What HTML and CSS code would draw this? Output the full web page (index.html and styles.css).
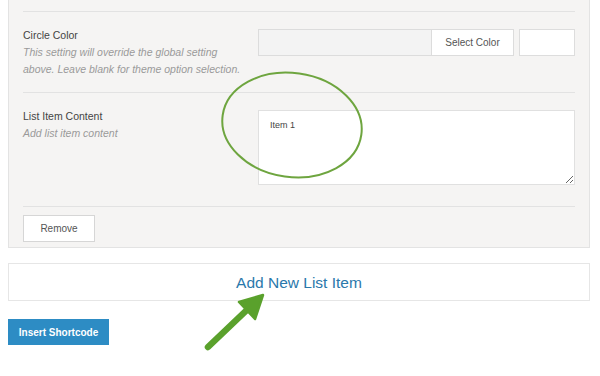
FILE: index.html
```html
<!DOCTYPE html>
<html lang="en">
<head>
    <meta charset="UTF-8">
    <meta name="viewport" content="width=device-width, initial-scale=1.0">
    <title>List Item Options</title>
    <link rel="stylesheet" href="styles.css">
</head>
<body>
    <div class="panel">
        <div class="row">
            <div class="label-col">
                <div class="label">Circle Color</div>
                <div class="desc">This setting will override the global setting<br>above. Leave blank for theme option selection.</div>
            </div>
            <div class="color-field">
                <div class="color-picker">
                    <span class="color-btn">Select Color</span>
                </div>
                <span class="color-swatch"></span>
            </div>
        </div>

        <div class="row">
            <div class="label-col">
                <div class="label">List Item Content</div>
                <div class="desc">Add list item content</div>
            </div>
            <div>
                <textarea class="content-box">Item 1</textarea>
            </div>
        </div>

        <div class="actions">
            <button class="remove-btn">Remove</button>
        </div>
    </div>

    <div class="add-item">Add New List Item</div>

    <button class="insert-btn">Insert Shortcode</button>

    <!-- annotations drawn over the screenshot -->
    <svg class="marks" width="600" height="376" viewBox="0 0 600 376">
        <ellipse cx="292" cy="125" rx="70" ry="52" transform="rotate(8 292 125)" fill="none" stroke="#6ea53f" stroke-width="2"/>
        <line x1="208" y1="347" x2="250" y2="307" stroke="#5aa12c" stroke-width="6.5" stroke-linecap="round"/>
        <polygon points="263,295 255,319 239,302" fill="#5aa12c" stroke="#5aa12c" stroke-width="2.5" stroke-linejoin="round"/>
    </svg>
</body>
</html>
```

FILE: styles.css
```css
html {
    min-height: 100%;
}
body {
    margin: 0;
    padding: 0 10px 0 8px;
    min-height: 376px;
    background-color: #fff;
    font-family: "Liberation Sans", Arial, sans-serif;
    color: #444;
    position: relative;
}
.panel {
    background-color: #f5f4f3;
    border: 1px solid #e3e3e3;
    border-top: 0;
    padding: 11px 14px 5px;
}
.row {
    display: grid;
    grid-template-columns: 235px 1fr;
    border-top: 1px solid #e2e2e2;
    padding: 16px 0 15px;
}
.label {
    font-size: 10.5px;
    line-height: 14px;
    color: #444;
}
.desc {
    margin-top: 2px;
    font-size: 10.5px;
    line-height: 16.5px;
    font-style: italic;
    color: #9a9a9a;
}
.color-field {
    display: flex;
    gap: 5px;
    margin-top: 1px;
}
.color-picker {
    display: flex;
    width: 256px;
    height: 27px;
    box-sizing: border-box;
    border: 1px solid #dcdcdc;
    background-color: #f3f3f3;
}
.color-btn {
    margin-left: auto;
    width: 81px;
    background-color: #fff;
    border-left: 1px solid #dcdcdc;
    display: flex;
    align-items: center;
    justify-content: center;
    font-size: 10px;
    color: #555;
}
.color-swatch {
    width: 56px;
    height: 27px;
    box-sizing: border-box;
    background-color: #fff;
    border: 1px solid #dddddd;
}
.content-box {
    display: block;
    width: 100%;
    height: 75px;
    box-sizing: border-box;
    margin: 1px 0 6px;
    padding: 8px 11px;
    border: 1px solid #e0e0e0;
    background-color: #fff;
    font-family: "Liberation Sans", Arial, sans-serif;
    font-size: 9px;
    line-height: 12px;
    color: #444;
    outline: none;
}
.actions {
    border-top: 1px solid #e2e2e2;
    padding-top: 8px;
}
.remove-btn {
    display: block;
    width: 72px;
    height: 27px;
    background-color: #fff;
    border: 1px solid #d6d6d6;
    font-family: "Liberation Sans", Arial, sans-serif;
    font-size: 10px;
    color: #555;
    padding: 0;
}
.add-item {
    margin-top: 15px;
    height: 38px;
    box-sizing: border-box;
    border: 1px solid #e6e6e6;
    background-color: #fff;
    display: flex;
    align-items: center;
    justify-content: center;
    padding-top: 1px;
    font-size: 15.5px;
    color: #2a78ab;
}
.insert-btn {
    display: block;
    margin-top: 18px;
    width: 101px;
    height: 26px;
    border: none;
    background-color: #2d8cc4;
    color: #fff;
    font-family: "Liberation Sans", Arial, sans-serif;
    font-weight: bold;
    font-size: 10px;
    padding: 0;
}
.marks {
    position: absolute;
    left: 0;
    top: 0;
    pointer-events: none;
}
```
